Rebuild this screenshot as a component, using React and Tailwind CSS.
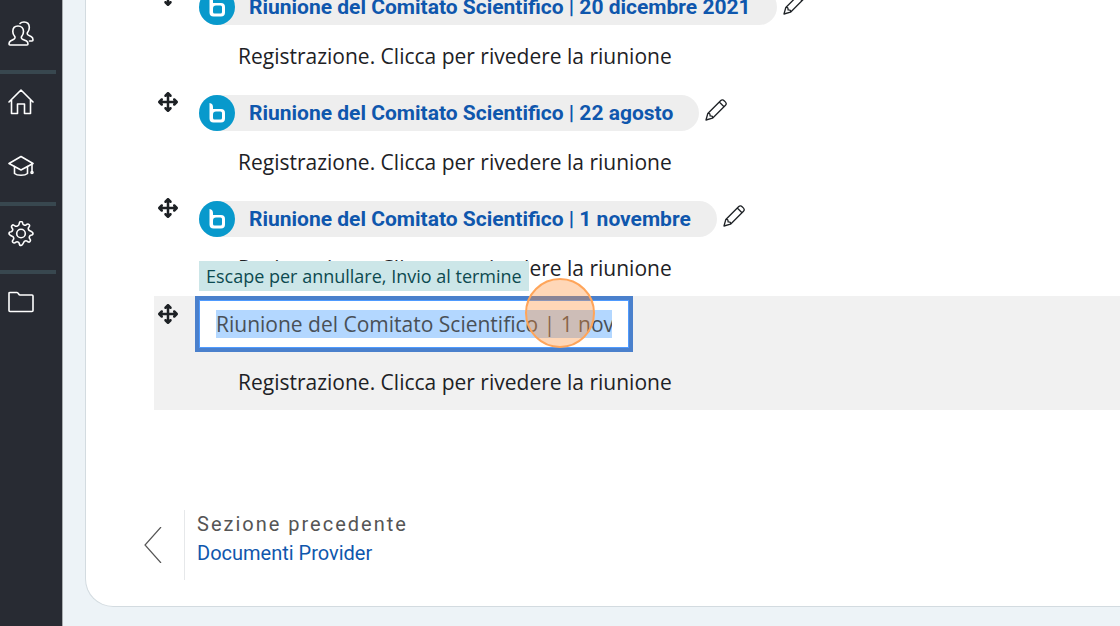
import { useEffect, useRef, useState } from 'react'
import { FaArrowsUpDownLeftRight } from 'react-icons/fa6'

const meetings = [
  { id: 1, title: 'Riunione del Comitato Scientifico | 20 dicembre 2021' },
  { id: 2, title: 'Riunione del Comitato Scientifico | 22 agosto' },
  { id: 3, title: 'Riunione del Comitato Scientifico | 1 novembre' },
]

function LineIcon({ children }) {
  return (
    <svg
      viewBox="0 0 26 26"
      className="size-[26px]"
      fill="none"
      stroke="currentColor"
      strokeWidth="1.6"
      strokeLinejoin="round"
      strokeLinecap="round"
      aria-hidden="true"
    >
      {children}
    </svg>
  )
}

function SideLink({ label, children }) {
  return (
    <a
      href="#"
      aria-label={label}
      className="flex h-16 items-center pb-2 pl-2 text-white"
    >
      <LineIcon>{children}</LineIcon>
    </a>
  )
}

function Divider() {
  return <div className="mr-1.5 h-1 bg-[#38474f]"></div>
}

function Sidebar() {
  return (
    <nav className="w-[63px] shrink-0 border-r border-[#a9adb0] bg-[#282b33] pt-1.5">
      <SideLink label="Partecipanti">
        <path d="M10 5C6.500 5 4.800 7.500 4.800 10.500c0 2 .7 3.500 1.800 4.800.8 1 .5 2.200-.8 2.900l-3.300 1.800C1.300 20.700 1 21.500 1 23c0 .6.400 1 1 1h17c.6 0 1-.4 1-1 0-1.500-.3-2.300-1.500-3L14.500 18.200c-1.300-.7-1.500-1.900-.7-2.900 1-1.300 1.700-2.800 1.700-4.800C15.500 7.500 13.500 5 10 5z" />
        <path d="M12 2.500C13 1.400 14.500 1 16 1c3.500 0 5.300 2.500 5.300 5.500 0 2-.6 3.600-1.600 4.800-.8 1-.6 2.100.7 2.800l3 1.600c1.300.7 1.600 1.500 1.600 3.300 0 .6-.4 1-1 1h-2.500" />
      </SideLink>
      <Divider />
      <SideLink label="Home">
        <path d="M1 13 13 1l12 12M3.500 11v13.500h6V15h7v9.500h6V11" />
      </SideLink>
      <SideLink label="Corsi">
        <path d="M1 10.500 13 3.500l12 7-12 6.500z" />
        <path d="M6.500 13.500v7c1.500 1.300 4 1.800 6.500 1.800s5-.5 6.500-1.800v-7M24 11.500v7" />
        <circle cx="24" cy="19.500" r="1" />
      </SideLink>
      <Divider />
      <SideLink label="Impostazioni">
        <circle cx="13" cy="12.500" r="4.300" />
        <path
          transform="translate(0 -.5)"
          d="M11.200 3.200C11.400 1.500 11.700 1 13 1s1.600.5 1.800 2.200c.2 1.200 2.200 2 3.200 1.200 1.300-1.100 2-1.300 3-.4s.7 1.800-.4 3c-.8 1 0 3 1.200 3.200C24.500 11.400 25 11.700 25 13s-.5 1.600-2.200 1.800c-1.200.2-2 2.200-1.200 3.200 1.100 1.300 1.300 2 .4 3s-1.800.7-3-.4c-1-.8-3 0-3.200 1.200C14.600 24.500 14.300 25 13 25s-1.600-.5-1.800-2.200c-.2-1.200-2.200-2-3.200-1.200-1.300 1.100-2 1.300-3 .4s-.7-1.800.4-3c.8-1 0-3-1.200-3.200C1.500 14.600 1 14.300 1 13s.5-1.600 2.200-1.800c1.200-.2 2-2.200 1.200-3.200C3.300 6.700 3.100 6 4 5s1.800-.7 3 .4c1 .8 4 0 4.200-2.200z"
        />
      </SideLink>
      <Divider />
      <SideLink label="File">
        <path d="M1 21.500v-17c0-.8.300-1 1-1h7c1.500 0 1.500 2.500 3 2.500h12c.7 0 1 .3 1 1v14.500c0 .7-.3 1-1 1H2c-.7 0-1-.3-1-1z" />
      </SideLink>
    </nav>
  )
}

function MeetingLogo() {
  return (
    <svg viewBox="0 0 36 36" className="size-9 shrink-0" aria-hidden="true">
      <circle cx="18" cy="18" r="18" fill="#0899cc" />
      <path
        d="M10.500 8c2.500.4 3.500 1.500 3.500 4v2H22a4 4 0 0 1 4 4v5.500a4 4 0 0 1-4 4h-7.500a4 4 0 0 1-4-4z"
        fill="#fff"
      />
      <path
        d="M17 16.500h4.500a1.500 1.500 0 0 1 1.500 1.500v5a1.500 1.500 0 0 1-1.500 1.500H15.500a1.500 1.500 0 0 1-1.500-1.500v-3.500A3 3 0 0 1 17 16.500z"
        fill="#0899cc"
      />
    </svg>
  )
}

function PencilIcon() {
  return (
    <svg
      viewBox="0 0 22 22"
      className="size-[22px]"
      fill="none"
      stroke="#1d2125"
      strokeWidth="1.300"
      strokeLinejoin="round"
      aria-hidden="true"
    >
      <path d="M1 21l1.800-6.500L15.800 1.500c1-1 2.300-.8 3.300.2l1.200 1.200c1 1 1.200 2.300.2 3.300L7.500 19.200zM2.800 14.500c1.800-.4 2.400.4 2.300 2.400 2-.1 2.800.5 2.400 2.300M14.300 3l4.700 4.700" />
    </svg>
  )
}

function MoveButton() {
  return (
    <button
      type="button"
      aria-label="Sposta"
      className="mt-2 ml-1 size-5 shrink-0 text-[#1d2125]"
    >
      <FaArrowsUpDownLeftRight className="size-5" />
    </button>
  )
}

function Description() {
  return (
    <p className="ml-[39px] text-[21px] leading-8 text-[#1d2125]">
      Registrazione. Clicca per rivedere la riunione
    </p>
  )
}

function Meeting({ title }) {
  return (
    <li className="flex h-[106px] items-start">
      <MoveButton />
      <div className="ml-[21px] pt-[11px]">
        <div className="flex items-center">
          <a
            href="#"
            className="flex items-center rounded-full bg-[#eee] pr-[26px] font-[Roboto] text-[21px] leading-9 font-bold text-[#0f57ad]"
          >
            <MeetingLogo />
            <span className="ml-[14px]">{title}</span>
          </a>
          <button
            type="button"
            aria-label="Modifica titolo"
            className="mb-1.5 ml-1.5"
          >
            <PencilIcon />
          </button>
        </div>
        <div className="mt-[15px]">
          <Description />
        </div>
      </div>
    </li>
  )
}

function EditingMeeting() {
  const inputRef = useRef(null)
  const [title, setTitle] = useState(
    'Riunione del Comitato Scientifico | 1 novembre',
  )

  useEffect(() => {
    const input = inputRef.current
    input.focus()
    // backward keeps the start of a long title in view
    input.setSelectionRange(0, input.value.length, 'backward')
    input.scrollLeft = 0
  }, [])

  return (
    <li className="relative flex h-[114px] items-start bg-[#f1f1f1]">
      <MoveButton />
      <div className="ml-[17px]">
        <input
          ref={inputRef}
          value={title}
          onChange={(e) => setTitle(e.target.value)}
          aria-label="Nuovo titolo"
          aria-describedby="edit-hint"
          className="block h-14 w-[438px] border-4 border-[#4a80cc] bg-white px-[17px] text-[21px] text-[#495057] ring-1 ring-[#4f9bff] outline-none ring-inset selection:bg-[#b3d7ff] selection:text-[#495057]"
        />
        <div className="mt-[14px] ml-1">
          <Description />
        </div>
      </div>
      <span
        id="edit-hint"
        className="absolute -top-[35px] left-[45px] bg-[#cce6e8] px-[7px] text-[18px] leading-[30px] whitespace-nowrap text-[#0c4a50]"
      >
        Escape per annullare, Invio al termine
      </span>
      <span className="pointer-events-none absolute -top-[18px] left-[371px] size-[70px] rounded-full border-2 border-[#ffa55a] bg-[#ff8c32]/35"></span>
    </li>
  )
}

export default function App() {
  return (
    <div className="flex h-screen overflow-hidden bg-[#edf3f7] font-['Open_Sans',sans-serif]">
      <Sidebar />
      <main className="ml-[22px] min-w-0 flex-1">
        <div className="rounded-bl-[28px] border-b border-l border-[#d3dbe0] bg-white pb-[26px]">
          <ul className="-mt-[22px] ml-[68px]">
            {meetings.map((meeting) => (
              <Meeting key={meeting.id} title={meeting.title} />
            ))}
            <EditingMeeting />
          </ul>
          <a
            href="#"
            className="mt-[100px] ml-[58px] flex w-fit items-center font-[Roboto]"
          >
            <svg
              viewBox="0 0 18 36"
              className="h-9 w-[18px]"
              fill="none"
              stroke="#555"
              strokeWidth="1.200"
              aria-hidden="true"
            >
              <path d="M17 0 1 18l16 18" />
            </svg>
            <span className="ml-[22px] flex h-[70px] flex-col border-l border-[#e6e8ea] pl-3">
              <span className="text-[20px] leading-7 tracking-[2px] text-[#555]">
                Sezione precedente
              </span>
              <span className="text-[20px] leading-[30px] text-[#0f57ad]">
                Documenti Provider
              </span>
            </span>
          </a>
        </div>
      </main>
    </div>
  )
}
